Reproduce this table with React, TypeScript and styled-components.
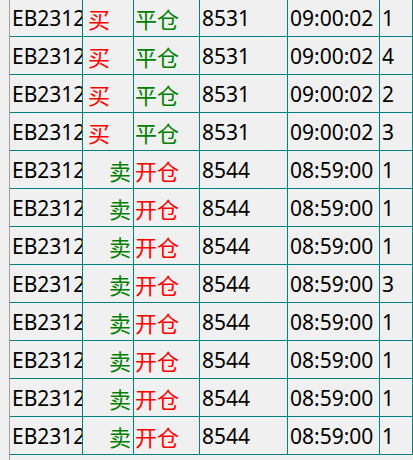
import React from 'react'
import styled, { createGlobalStyle } from 'styled-components'

type Side = 'buy' | 'sell'

interface Trade {
  code: string
  side: Side
  offset: string
  price: number
  time: string
  volume: number
}

const trades: Trade[] = [
  { code: 'EB2312', side: 'buy', offset: '平仓', price: 8531, time: '09:00:02', volume: 1 },
  { code: 'EB2312', side: 'buy', offset: '平仓', price: 8531, time: '09:00:02', volume: 4 },
  { code: 'EB2312', side: 'buy', offset: '平仓', price: 8531, time: '09:00:02', volume: 2 },
  { code: 'EB2312', side: 'buy', offset: '平仓', price: 8531, time: '09:00:02', volume: 3 },
  { code: 'EB2312', side: 'sell', offset: '开仓', price: 8544, time: '08:59:00', volume: 1 },
  { code: 'EB2312', side: 'sell', offset: '开仓', price: 8544, time: '08:59:00', volume: 1 },
  { code: 'EB2312', side: 'sell', offset: '开仓', price: 8544, time: '08:59:00', volume: 1 },
  { code: 'EB2312', side: 'sell', offset: '开仓', price: 8544, time: '08:59:00', volume: 3 },
  { code: 'EB2312', side: 'sell', offset: '开仓', price: 8544, time: '08:59:00', volume: 1 },
  { code: 'EB2312', side: 'sell', offset: '开仓', price: 8544, time: '08:59:00', volume: 1 },
  { code: 'EB2312', side: 'sell', offset: '开仓', price: 8544, time: '08:59:00', volume: 1 },
  { code: 'EB2312', side: 'sell', offset: '开仓', price: 8544, time: '08:59:00', volume: 1 },
]

const RED = '#ff0000'
const GREEN = '#008000'

const GlobalStyle = createGlobalStyle`
  html, body {
    margin: 0;
    padding: 0;
    background: #f0f0f0;
    overflow: hidden;
  }
`

const App = () => (
  <>
    <GlobalStyle />
    <Frame>
      <Grid>
        {trades.map((t, i) => (
          <React.Fragment key={i}>
            <Cell>{t.code}</Cell>
            <SideCell side={t.side}>{t.side === 'buy' ? '买' : '卖'}</SideCell>
            <OffsetCell color={t.side === 'buy' ? GREEN : RED}>{t.offset}</OffsetCell>
            <Cell>{t.price}</Cell>
            <Cell>{t.time}</Cell>
            <Cell>{t.volume}</Cell>
          </React.Fragment>
        ))}
      </Grid>
    </Frame>
  </>
)

const Frame = styled.div`
  height: 460px;
  margin-left: 9px;
  border-left: 1px solid #a0a0a0;
  overflow: hidden;
`

const Grid = styled.div`
  display: grid;
  grid-template-columns: 73px 51px 66px 88px 92px 1fr;
  grid-auto-rows: 38px;
  margin-top: -1px;
  font-family: 'Noto Sans', 'Noto Sans CJK SC', sans-serif;
  font-size: 21px;
`

const Cell = styled.div<{ color?: string }>`
  box-sizing: border-box;
  display: flex;
  align-items: center;
  padding: 0 2px;
  border-right: 1px solid #008080;
  border-bottom: 1px solid #008080;
  color: ${(p) => p.color || '#000'};
  white-space: nowrap;
  overflow: hidden;
`

const OffsetCell = styled(Cell)`
  font-size: 22px;
  padding: 0 1px;
`

const SideCell = styled(Cell)<{ side: Side }>`
  font-size: 22px;
  justify-content: ${(p) => (p.side === 'buy' ? 'flex-start' : 'flex-end')};
  padding: ${(p) => (p.side === 'buy' ? '0 0 0 5px' : '0 2px 0 0')};
  color: ${(p) => (p.side === 'buy' ? RED : GREEN)};
`

export default App
